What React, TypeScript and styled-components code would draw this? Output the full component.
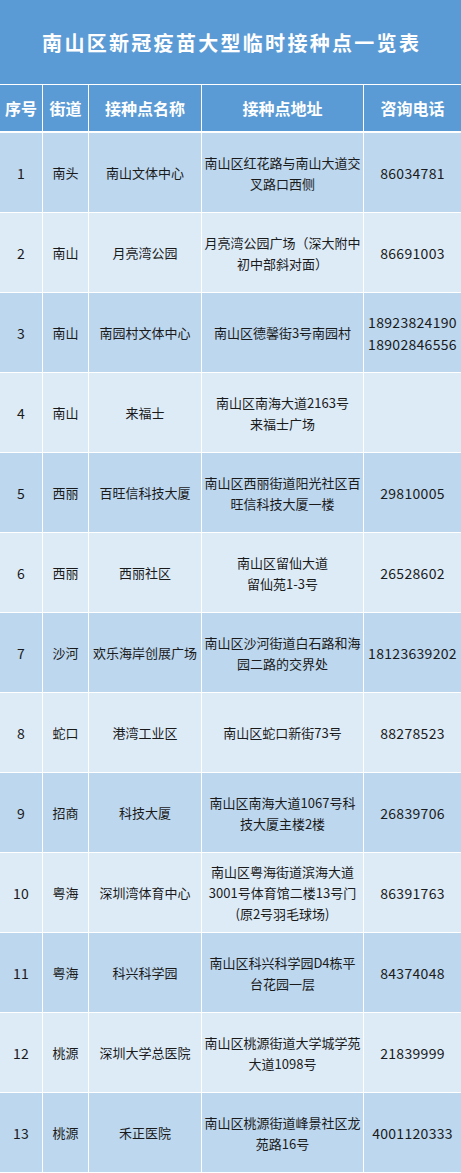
import React from "react";
import styled, { createGlobalStyle } from "styled-components";

const GlobalStyle = createGlobalStyle`
  html, body { margin: 0; padding: 0; background: #ffffff; }
  body { font-family: "Noto Sans CJK SC", "Noto Sans", sans-serif; }
`;

const Page = styled.div`
  width: 461px;
  display: flex;
  flex-direction: column;
  gap: 1px;
  background: #ffffff;
`;

const TitleBar = styled.div`
  height: 84px;
  background: #5b9bd5;
  color: #ffffff;
  display: flex;
  align-items: center;
  justify-content: center;
  font-size: 20px;
  font-weight: 700;
  letter-spacing: 2.3px;
  padding-left: 2.3px;
`;

const Row = styled.div<{ $header?: boolean }>`
  display: grid;
  grid-template-columns: 42px 45px 112px 161px 97px;
  column-gap: 1px;
  height: ${(p) => (p.$header ? "46px" : "79px")};
  margin-bottom: ${(p) => (p.$header ? "1px" : "0")};
`;

const HeaderCell = styled.div`
  background: #5b9bd5;
  color: #ffffff;
  font-size: 16px;
  font-weight: 700;
  display: flex;
  align-items: center;
  justify-content: center;
  white-space: nowrap;
`;

const Cell = styled.div<{ $dark: boolean }>`
  background: ${(p) => (p.$dark ? "#bdd7ee" : "#ddebf7")};
  color: #1a1a1a;
  font-size: 13px;
  line-height: 21px;
  display: flex;
  flex-direction: column;
  align-items: center;
  justify-content: center;
  text-align: center;
  white-space: nowrap;
`;

const NumText = styled.span`
  font-size: 14px;
  line-height: 22px;
  letter-spacing: 0.3px;
`;

type Site = {
  no: number;
  street: string;
  name: string;
  addr: string[];
  phone: string[];
};

const sites: Site[] = [
  { no: 1, street: "南头", name: "南山文体中心", addr: ["南山区红花路与南山大道交", "叉路口西侧"], phone: ["86034781"] },
  { no: 2, street: "南山", name: "月亮湾公园", addr: ["月亮湾公园广场（深大附中", "初中部斜对面）"], phone: ["86691003"] },
  { no: 3, street: "南山", name: "南园村文体中心", addr: ["南山区德馨街3号南园村"], phone: ["18923824190", "18902846556"] },
  { no: 4, street: "南山", name: "来福士", addr: ["南山区南海大道2163号", "来福士广场"], phone: [] },
  { no: 5, street: "西丽", name: "百旺信科技大厦", addr: ["南山区西丽街道阳光社区百", "旺信科技大厦一楼"], phone: ["29810005"] },
  { no: 6, street: "西丽", name: "西丽社区", addr: ["南山区留仙大道", "留仙苑1-3号"], phone: ["26528602"] },
  { no: 7, street: "沙河", name: "欢乐海岸创展广场", addr: ["南山区沙河街道白石路和海", "园二路的交界处"], phone: ["18123639202"] },
  { no: 8, street: "蛇口", name: "港湾工业区", addr: ["南山区蛇口新街73号"], phone: ["88278523"] },
  { no: 9, street: "招商", name: "科技大厦", addr: ["南山区南海大道1067号科", "技大厦主楼2楼"], phone: ["26839706"] },
  { no: 10, street: "粤海", name: "深圳湾体育中心", addr: ["南山区粤海街道滨海大道", "3001号体育馆二楼13号门", "(原2号羽毛球场)"], phone: ["86391763"] },
  { no: 11, street: "粤海", name: "科兴科学园", addr: ["南山区科兴科学园D4栋平", "台花园一层"], phone: ["84374048"] },
  { no: 12, street: "桃源", name: "深圳大学总医院", addr: ["南山区桃源街道大学城学苑", "大道1098号"], phone: ["21839999"] },
  { no: 13, street: "桃源", name: "禾正医院", addr: ["南山区桃源街道峰景社区龙", "苑路16号"], phone: ["4001120333"] },
];

const headers = ["序号", "街道", "接种点名称", "接种点地址", "咨询电话"];

export default function App() {
  return (
    <>
      <GlobalStyle />
      <Page>
        <TitleBar>南山区新冠疫苗大型临时接种点一览表</TitleBar>
        <Row $header>
          {headers.map((h) => (
            <HeaderCell key={h}>{h}</HeaderCell>
          ))}
        </Row>
        {sites.map((s) => {
          const dark = s.no % 2 === 1;
          return (
            <Row key={s.no}>
              <Cell $dark={dark}>
                <NumText>{s.no}</NumText>
              </Cell>
              <Cell $dark={dark}>{s.street}</Cell>
              <Cell $dark={dark}>{s.name}</Cell>
              <Cell $dark={dark}>
                {s.addr.map((line) => (
                  <span key={line}>{line}</span>
                ))}
              </Cell>
              <Cell $dark={dark}>
                {s.phone.map((p) => (
                  <NumText key={p}>{p}</NumText>
                ))}
              </Cell>
            </Row>
          );
        })}
      </Page>
    </>
  );
}
